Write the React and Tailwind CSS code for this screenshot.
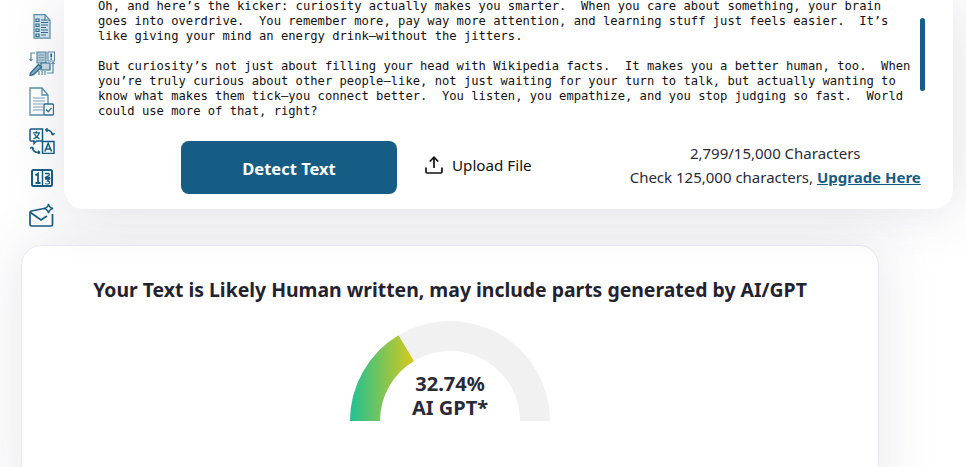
import React from 'react';

const paragraphs = [
  [
    'Oh, and here’s the kicker: curiosity actually makes you smarter.  When you care about something, your brain',
    'goes into overdrive.  You remember more, pay way more attention, and learning stuff just feels easier.  It’s',
    'like giving your mind an energy drink—without the jitters.',
  ],
  [
    'But curiosity’s not just about filling your head with Wikipedia facts.  It makes you a better human, too.  When',
    'you’re truly curious about other people—like, not just waiting for your turn to talk, but actually wanting to',
    'know what makes them tick—you connect better.  You listen, you empathize, and you stop judging so fast.  World',
    'could use more of that, right?',
  ],
];

function ChecklistIcon() {
  return (
    <svg width="18" height="25" viewBox="0 0 18 25" fill="none" stroke="#5b8fab" strokeWidth="1.2">
      <path d="M1 .7h11l5 5.500v18H1z" fill="#d5e4ec" />
      <path d="M12 .7v5.500h5" />
      <g stroke="#2f7092" strokeWidth="1.200">
        <path d="M3 5h3v2.500H3zM3 10h3v2.500H3zM3 15h3v2.500H3zM3 20h3v2.500H3z" />
        <path d="M8 6h4M8 8.500h7M8 11h7M8 13.500h5M8 16h7M8 18.500h7M8 21h5" />
      </g>
    </svg>
  );
}

function WorkflowIcon() {
  return (
    <svg width="26" height="25" viewBox="0 0 26 25" fill="none" stroke="#5b8fab" strokeWidth="1.200">
      <path d="M8 1h9v11H8z" fill="#b9cfdb" />
      <path d="M9.500 4h6M9.500 6.500h6M9.500 9h6" stroke="#7a9fb4" />
      <path d="M19 1h6.500v9H19z" />
      <path d="M22.200 2.500v4M22.200 7.500v1.300" stroke="#155d84" strokeWidth="1.600" />
      <path d="M12 12h9v7h-9z" fill="#c7d8e2" stroke="#2f7092" />
      <path d="M6 2H2v8M2 10l-1.500-2M2 10l1.500-2M24 11v11h-6M24 11l-1.500 2M24 11l1.500 2" />
      <path d="M1.500 22l8-8.500 3 2.500-8 7.500-3.500 1z" fill="#8fb0c3" stroke="#2f7092" strokeWidth="1.400" />
      <path d="M10 20v4M13 20v4M16 20v4" />
    </svg>
  );
}

function DocCheckIcon() {
  return (
    <svg width="25" height="29" viewBox="0 0 25 29" fill="none" stroke="#5b8fab" strokeWidth="1.300">
      <path d="M15 28H1V1h12l6 7v9" />
      <path d="M13 1v7h6" />
      <path d="M4 11h12M4 14h12M4 17h12M4 20h10M4 23h10" stroke="#a9c3d2" strokeWidth="1.400" />
      <rect x="15" y="17" width="9.500" height="11" rx="1.200" fill="#fff" stroke="#2f7092" />
      <path d="M17 22.500l2.300 2.300 3.200-4" stroke="#2f7092" />
    </svg>
  );
}

function TranslateIcon() {
  return (
    <svg width="26" height="26" viewBox="0 0 26 26" fill="none" stroke="#155d84" strokeWidth="1.500">
      <path d="M2 1h11.500v12H7.500l-2.500 2.500V13H2a1 1 0 0 1-1-1V2a1 1 0 0 1 1-1z" />
      <path d="M4 4.800h7M7.500 3v1.800M10 4.800c-.5 2.700-2.700 4.800-5.500 6M5.500 6c.8 2 2.500 3.700 5 4.800" strokeWidth="1.300" />
      <path d="M13.500 13.500H25v12H13.500z" />
      <path d="M15.800 23.500l3.400-8 3.400 8M17 21h4.400" />
      <path d="M16.500 2c3-.5 6 1 7.500 5M16.500 2l2-1.700M16.500 2l2 1.700M24 7l1.500-1.800M24 7l-1.800-1.500" />
      <path d="M11 24.500c-3.500.5-7-1-8-5.500M11 24.500l-2-1.800M11 24.500l-2 1.300M3 19l-2 1.500M3 19l1.800 1.800" />
    </svg>
  );
}

function RatioIcon() {
  return (
    <svg width="22" height="18" viewBox="0 0 22 18" fill="none" stroke="#155d84">
      <rect x="1" y="1" width="20" height="16" rx="1.500" strokeWidth="2" />
      <path d="M11.500 1v16" strokeWidth="1.500" />
      <path d="M4.500 6.500l2.500-2v9.500M4.500 14h5" strokeWidth="1.800" />
      <path d="M14 4.500h3.500c.8 0 1 1.200.5 2L14 8.500h5M14 10h4.500l-2 2c1.500 0 2.500.7 2 2-.4 1-3 1-4.500.5" strokeWidth="1.300" />
    </svg>
  );
}

function MailSparkIcon() {
  return (
    <svg width="25" height="24" viewBox="0 0 25 24" fill="none" stroke="#155d84" strokeWidth="1.700">
      <path d="M15 5.500L2.500 8a1.500 1.500 0 0 0-1.500 1.500v12a1.500 1.500 0 0 0 1.500 1.500H22a1.500 1.500 0 0 0 1.500-1.500V11" />
      <path d="M1.500 9.500L12 17l6-4" />
      <path d="M19.500.8c.4 3 1.300 3.900 4.500 4.700-3.200.8-4.100 1.700-4.500 4.700-.4-3-1.300-3.900-4.500-4.700 3.200-.8 4.100-1.700 4.500-4.700z" strokeWidth="1.400" />
    </svg>
  );
}

function Sidebar() {
  return (
    <div className="w-[31px] h-[235px] shrink-0 bg-white rounded-b-[16px] flex flex-col items-center">
      <div className="h-[37px] mt-[14px]"><ChecklistIcon /></div>
      <div className="h-[36px]"><WorkflowIcon /></div>
      <div className="h-[41px]"><DocCheckIcon /></div>
      <div className="h-[41px]"><TranslateIcon /></div>
      <div className="h-[34px]"><RatioIcon /></div>
      <div><MailSparkIcon /></div>
    </div>
  );
}

function Gauge() {
  return (
    <div className="relative w-[200px] h-[100px]">
      <svg width="200" height="100" viewBox="0 0 200 100">
        <defs>
          <linearGradient id="gaugeFill" gradientUnits="userSpaceOnUse" x1="0" y1="0" x2="64" y2="0">
            <stop offset="0" stopColor="#1fc095" />
            <stop offset="1" stopColor="#d9c91a" />
          </linearGradient>
        </defs>
        <path d="M0 100A100 100 0 0 1 200 100H170A70 70 0 0 0 30 100Z" fill="#f1f1f1" />
        <path d="M0 100A100 100 0 0 1 48.500 14.300L63.900 40A70 70 0 0 0 30 100Z" fill="url(#gaugeFill)" />
      </svg>
      <div className="absolute left-0 right-0 top-[51px] text-center text-[#2a2a38] font-bold text-[20px] leading-[24px]">
        <div>32.74%</div>
        <div>AI GPT*</div>
      </div>
    </div>
  );
}

export default function App() {
  return (
    <div className="relative w-[966px] h-[467px] overflow-hidden bg-white font-['Noto_Sans','Open_Sans',sans-serif]">
      <div className="flex pl-[26px]">
        <Sidebar />
        <div className="ml-[7px] w-[889px] h-[209px] bg-white rounded-b-[20px] shadow-[0_0_60px_rgba(60,60,100,0.16)] relative z-10">
          <div className="flex">
            <div className="ml-[34px] -mt-[1px] w-[822px] font-['DejaVu_Sans_Mono',monospace] text-[12.17px] leading-[15px] text-[#111] whitespace-pre">
              {paragraphs.map((lines, i) => (
                <div key={i} className={i > 0 ? 'mt-[15px]' : ''}>
                  {lines.map((line) => (
                    <div key={line}>{line}</div>
                  ))}
                </div>
              ))}
            </div>
            <div className="w-[5px] h-[73px] mt-[18px] rounded-full bg-[#155d84]" />
          </div>
          <div className="flex items-center mt-[22px] pl-[117px]">
            <button className="w-[216px] h-[53px] pt-[4px] rounded-[8px] bg-[#155d84] text-white font-bold text-[16.5px]">
              Detect Text
            </button>
            <div className="flex items-center ml-[27px] -mt-[4px] text-[#111] text-[15.2px]">
              <svg width="20" height="20" viewBox="0 0 20 20" fill="none" stroke="#111" strokeWidth="1.700">
                <path d="M10 13V2.500M5.800 6.500L10 2.200l4.200 4.300M2 12.500v4.300c0 .7.500 1.200 1.200 1.200h13.600c.7 0 1.200-.5 1.200-1.200v-4.300" />
              </svg>
              <span className="ml-[8px]">Upload File</span>
            </div>
            <div className="ml-[98px] flex flex-col items-center -mt-[6px] text-[#2a2a38] text-[15px] leading-[24px]">
              <div>2,799/15,000 Characters</div>
              <div>
                Check 125,000 characters, <a className="font-bold text-[#155d84] underline">Upgrade Here</a>
              </div>
            </div>
          </div>
        </div>
      </div>
      <div className="ml-[21px] mt-[10px] w-[858px] h-[260px] bg-white border border-[#e9e9f6] rounded-t-[20px] shadow-[0_0_60px_rgba(60,60,100,0.12)] flex flex-col items-center relative">
        <h2 className="mt-[29px] text-[#23232f] font-bold text-[19.4px] leading-[30px]">
          Your Text is Likely Human written, may include parts generated by AI/GPT
        </h2>
        <div className="mt-[16px]">
          <Gauge />
        </div>
      </div>
    </div>
  );
}
